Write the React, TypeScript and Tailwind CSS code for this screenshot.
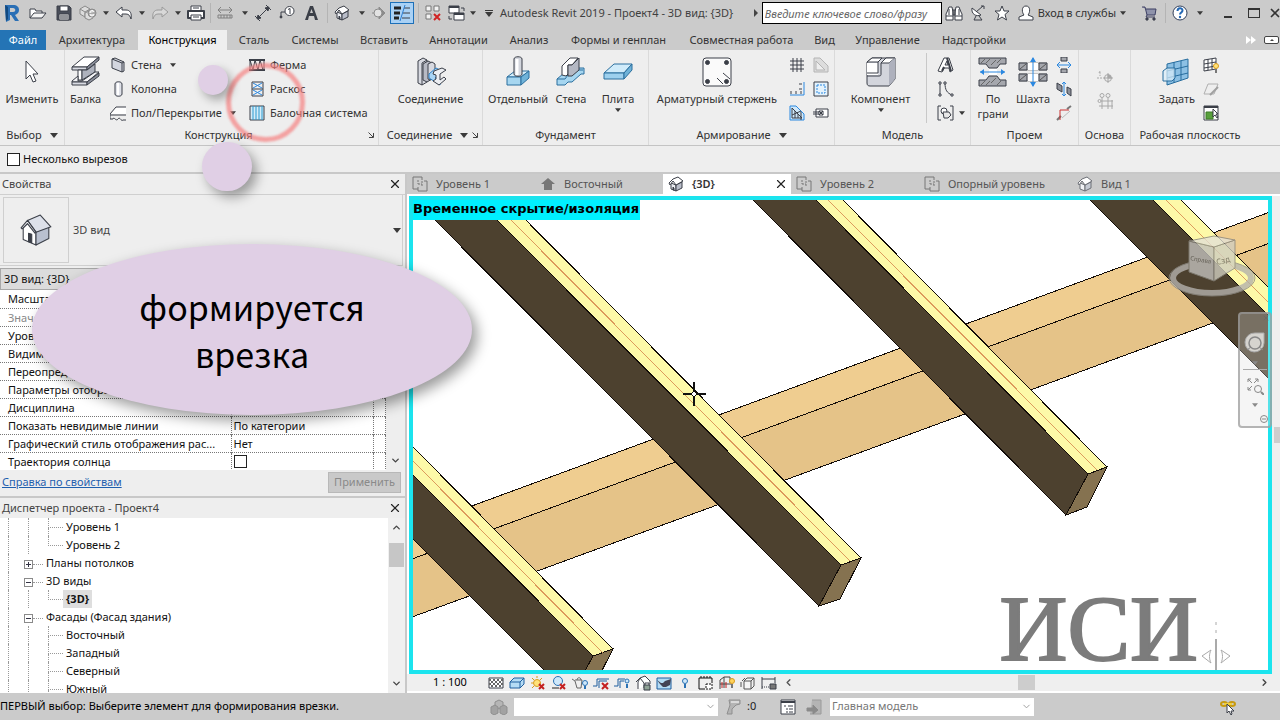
import { useState, type ReactNode } from "react";
import { ChevronDown, ChevronLeft, ChevronRight, ChevronUp, X } from "lucide-react";

interface PicProps {
  w?: number;
  h?: number;
  children: ReactNode;
}

// Small line drawing in the toolbar style: dark outline, white fill
function Pic({ w = 16, h = 16, children }: PicProps) {
  return (
    <svg
      width={w}
      height={h}
      viewBox={`0 0 ${w} ${h}`}
      fill="none"
      stroke="#3b3f48"
      strokeWidth={1}
      strokeLinejoin="round"
      className="shrink-0"
      aria-hidden="true"
    >
      {children}
    </svg>
  );
}

function Caret({ big = false, light = false }: { big?: boolean; light?: boolean }) {
  return (
    <svg width={big ? 8 : 6} height={big ? 5 : 4} viewBox="0 0 8 5" className="shrink-0" aria-hidden="true">
      <path d="M0 0h8L4 5z" fill={light ? "#8a8a8a" : "#3a3a3a"} />
    </svg>
  );
}

function Launcher() {
  return (
    <svg width="6" height="6" viewBox="0 0 6 6" className="shrink-0" aria-hidden="true">
      <path d="M0.5 0.5L5 5M5.5 1v4.5H1" fill="none" stroke="#444" />
    </svg>
  );
}

const icons = {
  revit: (
    <Pic w={16} h={18}>
      <path d="M1 1h8c4 0 6 2 6 5s-2 4-4 5l4 6h-4l-4-6H6v5l-4 2z" fill="#2a6fb5" stroke="none" />
      <path d="M6 4h3c3 0 3 4 0 4H6z" fill="#cbcbcb" stroke="none" />
      <path d="M1 1l3 2v12l-2 2z" fill="#12497f" stroke="none" />
    </Pic>
  ),
  open: (
    <Pic w={18}>
      <path d="M1 13V4h5l1 2h6v2" fill="#fff" />
      <path d="M1 13l4-5h12l-4 5z" fill="#f4f4f4" />
    </Pic>
  ),
  save: (
    <Pic>
      <path d="M1 1h12l2 2v12H1z" fill="#4a4f5a" />
      <path d="M4 1h8v5H4z" fill="#fff" />
      <path d="M3 9h10v6H3z" fill="#e8e8e8" />
      <path d="M4 11h8M4 13h8" />
    </Pic>
  ),
  sync: (
    <Pic w={18}>
      <g stroke="#8a8a8a" fill="#dcdcdc">
        <path d="M1 4l5-3 5 3-5 3zM1 4v5l5 3V7M11 4v4" />
        <path d="M6 8l4-2 4 2v5l-4 2-4-2z" />
        <circle cx="13" cy="8" r="4" fill="#a9a9a9" />
        <path d="M11 8a2 2 0 0 1 4-1M15 9a2 2 0 0 1-4 0" stroke="#fff" />
      </g>
    </Pic>
  ),
  undo: (
    <Pic w={18}>
      <path d="M1 7l6-5v3h4c4 0 6 3 5 9-1-3-2-5-5-5H7v3z" fill="#fff" />
    </Pic>
  ),
  redo: (
    <Pic w={18}>
      <path d="M17 7l-6-5v3H7c-4 0-6 3-5 9 1-3 2-5 5-5h4v3z" fill="#d8d8d8" stroke="#9a9a9a" />
    </Pic>
  ),
  print: (
    <Pic w={18}>
      <path d="M4 6V1h10v5" fill="#fff" />
      <path d="M1 6h16v7H1z" fill="#fff" strokeWidth={2} />
      <path d="M4 10h10v5H4z" fill="#fff" />
      <path d="M6 3h6M6 12h6" />
    </Pic>
  ),
  measure: (
    <Pic>
      <g stroke="#808080">
        <path d="M1 5h14M4 2L1 5l3 3M12 2l3 3-3 3" />
        <path d="M1 10h14v3H1zM4 10v3M7 10v3M10 10v3M13 10v3" />
      </g>
    </Pic>
  ),
  aligned: (
    <Pic>
      <path d="M3 13L13 3M0 11l5 5M11 0l5 5" />
      <path d="M2 14l1-4 3 3zM14 2l-1 4-3-3z" fill="#3b3f48" />
    </Pic>
  ),
  tag: (
    <Pic>
      <path d="M2 12V7h4" />
      <circle cx="2" cy="12" r="1" fill="#3b3f48" />
      <circle cx="10.500" cy="6" r="4.500" fill="#fff" />
      <path d="M9 4.500l2-1V9" />
    </Pic>
  ),
  textA: (
    <Pic>
      <path d="M2 15L7 1h3l5 14h-3l-1-4H6l-1 4zM7 8h3L8.500 4z" fill="#3b3f48" fillRule="evenodd" stroke="none" />
    </Pic>
  ),
  house: (
    <Pic>
      <path d="M3 7v6l5 2V9z" fill="#eceef3" />
      <path d="M8 9v6l6-3V6z" fill="#b9bdc9" />
      <path d="M1 7l4-4 5-2 5 4-7 4-3-4-3 4z" fill="#fff" />
      <path d="M5 14v-3l1 1v2z" fill="#3b3f48" />
    </Pic>
  ),
  viewHouse: (
    <Pic>
      <g stroke="#6d7077">
        <path d="M3 7v6l5 2V9z" fill="#f2f3f6" />
        <path d="M8 9v6l6-3V6z" fill="#c6cad3" />
        <path d="M1 7l4-4 5-2 5 4-7 4-3-4-3 4z" fill="#fff" />
      </g>
    </Pic>
  ),
  section: (
    <Pic>
      <path d="M1 8h3M8 2l6 6-6 6z" fill="#8c8c8c" stroke="#8c8c8c" />
      <circle cx="7" cy="8" r="4" fill="#e2e2e2" stroke="#8c8c8c" />
    </Pic>
  ),
  thin: (
    <Pic w={18}>
      <path d="M1 3h7M1 8h6M1 13h5" stroke="#222" strokeWidth={3} />
      <path d="M11 3h6M10 8h7M9 13h8" />
      <path d="M12 0L7 16" stroke="#2b7cd0" />
    </Pic>
  ),
  closeHidden: (
    <Pic>
      <path d="M1 1h5v5H1zM9 1h5v5H9zM1 9h5v5H1z" fill="#f2f2f2" stroke="#777" />
      <path d="M9 9l6 6M15 9l-6 6" stroke="#d02424" strokeWidth={2} />
    </Pic>
  ),
  switchWin: (
    <Pic w={18}>
      <path d="M1 1h10v7H1zM6 8h10v7H6z" fill="#fff" />
      <path d="M1 2h10M6 9h10" strokeWidth={2} />
      <path d="M13 3h3v3M1 11v3h3" />
    </Pic>
  ),
  binoculars: (
    <Pic w={18}>
      <path d="M2 7l2-5h3l1 5v8H1V9zM16 7l-2-5h-3l-1 5v8h7V9z" fill="#fff" />
      <path d="M8 5h2v5H8zM1 11h7M10 11h7M4 4v6M14 4v6" />
    </Pic>
  ),
  dish: (
    <Pic>
      <path d="M2 3c-1 6 4 9 9 7z" fill="#fff" />
      <path d="M6 7l7-6M11 1h3v3M6 11l-2 4h8l-3-4" />
    </Pic>
  ),
  star: (
    <Pic>
      <path d="M8 1l2 5h5l-4 3.500 1.500 5.500L8 12l-4.500 3L5 9.500 1 6h5z" fill="#fff" />
    </Pic>
  ),
  person: (
    <Pic>
      <path d="M8 1c5 0 4 7 2 9l5 2v3H1v-3l5-2C4 8 3 1 8 1z" fill="#fff" />
    </Pic>
  ),
  cart: (
    <Pic>
      <path d="M1 2h3l2 8h8l1-6H5" fill="#8f93ab" stroke="#3c3f63" />
      <path d="M6 10l-1 2h9" stroke="#3c3f63" />
      <circle cx="6" cy="14" r="1.200" fill="#3c3f63" />
      <circle cx="13" cy="14" r="1.200" fill="#3c3f63" />
    </Pic>
  ),
  help: (
    <Pic>
      <circle cx="8" cy="8" r="7" fill="#fff" stroke="#33415c" />
      <path d="M5.500 6c0-3.500 5-3.500 5-.5 0 2-2.500 2-2.500 4" stroke="#2468b4" strokeWidth={2} />
      <circle cx="8" cy="12" r="1.200" fill="#2468b4" stroke="none" />
    </Pic>
  ),
  cursor: (
    <Pic w={32} h={32}>
      <path d="M10 5v18l4-4 3 7 3-1-3-7h5z" fill="#fff" />
    </Pic>
  ),
  beam: (
    <Pic w={32} h={32}>
      <path d="M2 11L14 1h15l-12 10z" fill="#fff" />
      <path d="M2 11h15v3H2z" fill="#d9dbe2" />
      <path d="M17 11L29 1v3L17 14z" fill="#8b8f9b" />
      <path d="M8 14h4v10H8z" fill="#fff" />
      <path d="M12 14h5l8-6v8l-13 8z" fill="#aeb2bd" />
      <path d="M2 25l6-5v5h4l13-9h4L17 26H2z" fill="#f2f2f4" />
      <path d="M2 26h15v3H2z" fill="#d9dbe2" />
      <path d="M17 26l12-9v3l-12 9z" fill="#8b8f9b" />
    </Pic>
  ),
  wall: (
    <Pic>
      <path d="M2 2l3-1 9 4v9l-2 1-10-4z" fill="#d3d6df" />
      <path d="M2 2l10 4v9M12 6l2-1" />
    </Pic>
  ),
  column: (
    <Pic>
      <path d="M5 3c0-3 7-3 7 0v10c0 3-7 3-7 0z" fill="#e0e2e9" />
      <path d="M8 2v12" stroke="#fff" strokeWidth={2} />
    </Pic>
  ),
  floor: (
    <Pic>
      <path d="M6 2h10v7H1z" fill="#fff" stroke="none" />
      <path d="M16 2H6L0 9v5h3c1-3 3 3 5 0 2-3 3 3 5 1h3M0 10h16" />
    </Pic>
  ),
  truss: (
    <Pic>
      <path d="M0 3h16M0 13h16" strokeWidth={2} />
      <path d="M1 3v10M15 3v10M1 3l3 10 2-10 3 10 2-10 3 10" />
    </Pic>
  ),
  brace: (
    <Pic>
      <path d="M3 1h11v14H3zM3 8h11" />
      <path d="M4 2l9 5M13 2L4 7M4 9l9 5M13 9l-9 5" stroke="#2b88e0" />
    </Pic>
  ),
  beamSystem: (
    <Pic>
      <path d="M1 1h14v14H1z" fill="#d5ecf8" />
      <path d="M4 1v14M7 1v14M10 1v14M13 1v14" stroke="#2b9ad0" />
    </Pic>
  ),
  connection: (
    <Pic w={32} h={32}>
      <path d="M3 5l5-3 4 2v22l-5 3-4-2z" fill="#d7d9e0" />
      <path d="M7 7l5-3M7 7v22M8 8l5-3 4 2v16l-5 3-4-2z" fill="#b7bac4" />
      <path d="M13 8l4-2 3 2v13l-5 3-2-1z" fill="#d7d9e0" />
      <path d="M14 18l7-6 4 2v4l-5 4 5 3v4l-11-7z" fill="#a9d4f4" stroke="#2f7fc4" />
      <path d="M19 15l8-3 4 2-6 4v6l4-3 2 2-7 6-6-4 3-2v-4l-3-1z" fill="#eceef2" />
    </Pic>
  ),
  footing: (
    <Pic w={32} h={32}>
      <path d="M5 21l8-6h14l-8 6z" fill="#d8effb" stroke="#2b6f9e" />
      <path d="M5 21h14v8H5z" fill="#a6d6f0" stroke="#2b6f9e" />
      <path d="M19 21l8-6v7l-8 7z" fill="#6fb2d8" stroke="#2b6f9e" />
      <path d="M12 3c0-3 8-3 8 0v15c0 3-8 3-8 0z" fill="#d3d6dd" />
      <path d="M15 3v16" stroke="#fff" strokeWidth={3} />
    </Pic>
  ),
  footingWall: (
    <Pic w={32} h={32}>
      <path d="M2 23l6-5 4 1 8-7h9v6h-3l-9 8h-4l-3 3H2z" fill="#a6d6f0" stroke="#2b6f9e" />
      <path d="M2 23h8l3-4h4l6-5h5" stroke="#2b6f9e" />
      <path d="M7 19V10l8-8h8l-6 7H13v9l-2 2z" fill="#fff" />
      <path d="M13 9h4l7-7v12l-7 6h-4z" fill="#b4b8c3" />
    </Pic>
  ),
  slab: (
    <Pic w={32} h={32}>
      <path d="M2 17l10-9h18l-8 9z" fill="#d0ebfa" stroke="#2b6f9e" />
      <path d="M2 17h20v6H2z" fill="#9dd0ee" stroke="#2b6f9e" />
      <path d="M22 17l8-9v6l-8 9z" fill="#6fb2d8" stroke="#2b6f9e" />
    </Pic>
  ),
  rebar: (
    <Pic w={32} h={32}>
      <rect x="2" y="2" width="28" height="28" rx="3" fill="#fafafa" />
      <g fill="#3b3f48">
        <circle cx="6.500" cy="6.500" r="2" />
        <circle cx="25.500" cy="6.500" r="2" />
        <circle cx="6.500" cy="25.500" r="2" />
        <circle cx="25.500" cy="25.500" r="2" />
      </g>
      <path d="M16 22l6 6M22 17l7 6" />
    </Pic>
  ),
  mesh: (
    <Pic>
      <path d="M4 1v14M8 1v14M12 1v14M1 4h14M1 8h14M1 12h14" />
    </Pic>
  ),
  pathRebar: (
    <Pic>
      <path d="M1 14h14V1" stroke="#2b88e0" />
      <path d="M2 13v-3M7 13v-3M12 13v-3M13 3h-3M13 8h-3" />
    </Pic>
  ),
  fabric: (
    <Pic>
      <path d="M1 1h6l8 8v6H1z" fill="#cfe8fa" stroke="#2b88e0" />
      <path d="M3 3v10h10M3 3l10 10M6 6v7M9 9v4M12 7v8M3 10l9-4" />
    </Pic>
  ),
  areaOff: (
    <Pic>
      <path d="M1 1h6l8 8v6H1z" fill="#ddd" stroke="#b4b4b4" />
      <path d="M3 4v9h9z" fill="#eee" stroke="#b4b4b4" />
    </Pic>
  ),
  area: (
    <Pic>
      <path d="M1 1h14v14H1z" fill="#e4f2fc" />
      <path d="M4 4h8v8H4z" stroke="#2b88e0" strokeDasharray="2 1" />
    </Pic>
  ),
  coupler: (
    <Pic>
      <path d="M3 4h12v8H3z" fill="#fff" />
      <path d="M0 7h6M0 9h6M6 6h4v4H6zM6 6l4 4M10 6l-4 4" />
    </Pic>
  ),
  component: (
    <Pic w={32} h={32}>
      <path d="M2 6l5-4h23v21l-6 7H5c-2 0-3-1-3-3z" fill="#d3d5dc" />
      <path d="M2 7h11v12H2z" fill="#fff" stroke="none" />
      <path d="M2 6l5-4h10l-4 4zM16 7l5-5h9l-6 5z" fill="#fff" />
      <path d="M24 7l6-5v21l-6 7z" fill="#aeb1bd" stroke="none" />
      <path d="M2 20h12c2 0 2-1 2-2V7M13 6v11M2 17h11" />
    </Pic>
  ),
  modelText: (
    <Pic w={18}>
      <path d="M1 14L7 1h5l4 12-3 2-1-4H7l-2 4zM8 8h3l-1-4z" fill="#fff" fillRule="evenodd" />
      <path d="M10 1l4 13M5 14l2-4" strokeWidth={2} />
    </Pic>
  ),
  modelLine: (
    <Pic w={18}>
      <path d="M3 3v10M8 2c0 7 2 10 7 12" />
      <path d="M2 1h2v2H2zM2 13h2v2H2zM7 1h2v2H7zM14 13h2v2h-2z" fill="#fff" />
    </Pic>
  ),
  modelGroup: (
    <Pic w={18}>
      <path d="M4 1H1v14h3M13 1h3v14h-3" />
      <circle cx="7" cy="6" r="3" fill="#fff" />
      <path d="M6 7h6l2 3-3 3H7z" fill="#e7e7e7" />
    </Pic>
  ),
  openFace: (
    <Pic w={32} h={32}>
      <path d="M2 2h27v6h-6l-3 4h-8l-3-4H2zM2 30h27v-6h-6l-3-4h-8l-3 4H2z" fill="#a5a7ad" />
      <path d="M4 7l4-4M9 7l4-4M14 9l5-5M20 7l4-4M4 29l4-4M9 29l4-4M14 27l5-5M20 29l4-4" stroke="#666" />
      <path d="M12 13h8v6h-8z" fill="#fff" stroke="none" />
      <path d="M3 16h25" stroke="#2b88e0" />
      <path d="M7 13l-4 3 4 3zM24 13l4 3-4 3z" fill="#2b88e0" stroke="none" />
    </Pic>
  ),
  shaft: (
    <Pic w={32} h={32}>
      <path d="M2 7h28M2 14h28M2 18h28M2 25h28" stroke="#9a9a9a" />
      <path d="M2 7h8v7H2zM22 7h8v7h-8zM2 18h8v7H2zM22 18h8v7h-8z" fill="#a5a7ad" />
      <path d="M3 13l6-5M23 13l6-5M3 24l6-5M23 24l6-5" stroke="#555" />
      <path d="M11 7h10v7H11zM11 18h10v7H11z" fill="#fff" stroke="none" />
      <path d="M16 2v28" stroke="#2b88e0" />
      <path d="M13 6l3-5 3 5zM13 26l3 5 3-5z" fill="#2b88e0" stroke="none" />
    </Pic>
  ),
  openWall: (
    <Pic>
      <path d="M5 0h6v4H5zM5 12h6v4H5z" fill="#a5a7ad" />
      <path d="M1 8h14M4 5L1 8l3 3M12 5l3 3-3 3" stroke="#2b88e0" />
    </Pic>
  ),
  openVert: (
    <Pic>
      <path d="M1 2l5 3v6L1 8zM11 6l4 2v7l-4-3z" fill="#8d9099" />
      <path d="M8 1v14M6 3l2-2 2 2M6 13l2 2 2-2" stroke="#2b88e0" />
    </Pic>
  ),
  dormer: (
    <Pic>
      <path d="M1 15l4-4M11 4l4-3" stroke="#777" strokeWidth={2} />
      <path d="M6 13l8-7" stroke="#bbb" />
      <path d="M4 15V5h9" stroke="#c33" />
    </Pic>
  ),
  levelOff: (
    <Pic w={18}>
      <path d="M1 9h9M3 4l1-2v5" stroke="#a8a8a8" strokeDasharray="2 1" />
      <circle cx="12" cy="9" r="3.500" stroke="#a8a8a8" />
      <path d="M12 4v10M8 9h9M12 9V6a3 3 0 0 1 3 3z" fill="#a8a8a8" stroke="#a8a8a8" />
    </Pic>
  ),
  gridOff: (
    <Pic>
      <g stroke="#a8a8a8">
        <circle cx="5" cy="2.500" r="2" />
        <circle cx="11" cy="2.500" r="2" />
        <circle cx="2.500" cy="8" r="1.500" />
        <path d="M5 5v11M11 5v11M4 8h12M2 13h14M15 7v9" />
      </g>
    </Pic>
  ),
  setPlane: (
    <Pic w={32} h={32}>
      <path d="M6 8l21-5v19L6 29z" fill="#8cc0e4" stroke="#276d9e" />
      <path d="M13 6v21M20 5v19M6 15l21-5M6 22l21-5" stroke="#276d9e" />
      <path d="M2 15l4-3h8v10l-3 3H2z" fill="#dbeefa" fillOpacity=".7" stroke="#276d9e" />
    </Pic>
  ),
  showPlane: (
    <Pic>
      <path d="M1 3l12-2v11L1 14zM5 2v11M9 2v10M1 7l12-2M1 11l12-2" fill="#fff" />
      <circle cx="13" cy="9" r="2.500" fill="#ffe27a" stroke="#d99a1c" />
      <path d="M13 12v4" stroke="#777" strokeWidth={2} />
    </Pic>
  ),
  refPlane: (
    <Pic>
      <path d="M5 3h10l-4 10H1z" stroke="#b0b0b0" />
      <path d="M15 6l-8 8" stroke="#a0a0a0" strokeWidth={2} />
    </Pic>
  ),
  viewer: (
    <Pic>
      <path d="M1 1h14v14H1z" fill="#fff" />
      <path d="M1 2h14" strokeWidth={2} />
      <path d="M3 7h7v7H3z" fill="#58a03c" stroke="#3c7a26" />
      <path d="M10 4v8l2-2 2 3 1-1-2-3h2z" fill="#fff" />
    </Pic>
  ),
  plan: (
    <Pic>
      <g stroke="#777">
        <path d="M10 4V1H1v12h5M6 11v4h9V5h-3" />
        <path d="M6 8h4M10 5v6M6 4v4" strokeDasharray="2 1" />
      </g>
    </Pic>
  ),
  elevation: (
    <Pic>
      <path d="M8 2l7 6h-3v6H4V8H1z" fill="#777" stroke="none" />
    </Pic>
  ),
  detail: (
    <Pic>
      <path d="M1 3h14v10H1z" fill="#fff" />
      <path d="M1 5h14M1 9h14" stroke="#666" strokeWidth={2} strokeDasharray="2 2" />
      <path d="M3 7h12M3 11h12" stroke="#666" strokeWidth={2} strokeDasharray="2 2" />
    </Pic>
  ),
  style: (
    <Pic>
      <path d="M1 7l4-4h10v6l-4 4H1z" fill="#b5dcf5" stroke="#1f5f9e" />
      <path d="M1 7h10v6M11 7l4-4" stroke="#1f5f9e" />
    </Pic>
  ),
  sunOff: (
    <Pic>
      <circle cx="7" cy="8" r="3.500" fill="#ffe27a" stroke="#d99a1c" />
      <path d="M7 1v2M1 8h2M2 3l2 2M12 3l-2 2M2 13l2-2" stroke="#d99a1c" />
      <path d="M9 9l5 5M14 9l-5 5" stroke="#c42020" strokeWidth={2} />
    </Pic>
  ),
  shadowOff: (
    <Pic>
      <circle cx="7" cy="6" r="4.500" fill="#cfe8fa" stroke="#2b72b4" />
      <path d="M1 13h7" stroke="#888" strokeWidth={2} />
      <path d="M9 9l5 5M14 9l-5 5" stroke="#c42020" strokeWidth={2} />
    </Pic>
  ),
  render: (
    <Pic>
      <path d="M0 4l3 2 2 7h4l1-8H3M5 5c0-3 4-3 4 0" stroke="#666" />
      <circle cx="13" cy="8" r="2.500" fill="#cfe8fa" stroke="#2b72b4" />
      <path d="M13 11v3" stroke="#2b72b4" strokeWidth={2} />
    </Pic>
  ),
  crop: (
    <Pic>
      <path d="M0 11h4V4h12M6 13V6h8" stroke="#1f5f9e" />
      <path d="M9 8l6 6M15 8l-6 6" stroke="#c42020" strokeWidth={2} />
    </Pic>
  ),
  cropShow: (
    <Pic>
      <path d="M0 11h4V4h7M6 13V6h4" stroke="#1f5f9e" />
      <circle cx="13" cy="6" r="2" fill="#cfe8fa" stroke="#2b72b4" />
      <path d="M13 9v4" stroke="#2b72b4" strokeWidth={2} />
    </Pic>
  ),
  lockView: (
    <Pic>
      <path d="M3 14V7l2-4 5-2 5 5v3M1 7l4-4 4 5v5" fill="#fff" />
      <path d="M9 10h6v5H9z" fill="#8fa396" />
      <path d="M10 10V8h4v2" />
    </Pic>
  ),
  tempHide: (
    <Pic>
      <path d="M1 3h14v11H1z" fill="#b5dcf5" stroke="#1f5f9e" />
      <path d="M1 5l4 3h2l2-2 6-2-1 6-4 2H7L4 9z" fill="#445" stroke="none" />
    </Pic>
  ),
  bulb: (
    <Pic>
      <circle cx="8" cy="6" r="2.500" fill="#cfe8fa" stroke="#2b72b4" />
      <path d="M8 9v4" stroke="#2b72b4" strokeWidth={2} />
    </Pic>
  ),
  tempProps: (
    <Pic>
      <path d="M1 14V3h13v5M1 14h6" stroke="#111" />
      <path d="M3 3V1M6 3V1M9 3V1M12 3V1" stroke="#111" />
      <path d="M8 9h6v5H8z" fill="#fff" stroke="#111" strokeDasharray="2 1" />
    </Pic>
  ),
  analytic: (
    <Pic>
      <path d="M1 14V5l4-3h6v8M5 2v11M1 9h9" stroke="#444" />
      <path d="M3 7v6M7 7v6" stroke="#c42020" />
      <circle cx="13" cy="6" r="2.500" fill="#ffd35c" stroke="#d99a1c" />
      <path d="M13 9v4" stroke="#777" strokeWidth={2} />
    </Pic>
  ),
  displace: (
    <Pic>
      <path d="M4 6h7v8H4zM4 6l3-3h7l-3 3M14 3v8l-3 3M1 7v5M2 6l3-3" fill="#f5f5f5" stroke="#555" />
    </Pic>
  ),
  constraints: (
    <Pic>
      <path d="M1 2v12M14 2v6M1 4h13" />
      <path d="M1 12h7" strokeDasharray="1 1" />
      <path d="M9 9h6v5H9z" fill="#777" />
    </Pic>
  ),
  worksets: (
    <Pic w={18}>
      <path d="M5 3l4-2 4 2v5l-4 2-4-2z" fill="#b5b5b5" stroke="#8f8f8f" />
      <path d="M1 8l4-2 3 2v6l-4 2-3-2zM10 8l4-2 3 2v6l-3 2-4-2z" fill="#a2a2a2" stroke="#8f8f8f" />
    </Pic>
  ),
  brush: (
    <Pic>
      <path d="M3 1h11v4l-4 1-4 4v5H1l3-9z" fill="#b4b4b4" stroke="#8f8f8f" />
      <path d="M5 3h8" stroke="#fff" />
    </Pic>
  ),
  options: (
    <Pic>
      <path d="M1 1h14v14H1z" fill="#fff" />
      <path d="M1 3h14" strokeWidth={2} />
      <path d="M4 7h2M8 7h5M6 10h2M9 10h4M6 13h2M9 13h4" />
    </Pic>
  ),
  pinOff: (
    <Pic>
      <path d="M6 1h9v14H4" fill="#b4b4b4" stroke="#9a9a9a" />
      <path d="M1 9h6V6l5 5-5 4v-3H1z" fill="#8a8a8a" stroke="#8a8a8a" />
    </Pic>
  ),
  selectLinks: (
    <Pic>
      <ellipse cx="4" cy="5" rx="3" ry="2" stroke="#c79a10" strokeWidth={2} />
      <ellipse cx="12" cy="5" rx="3" ry="2" stroke="#c79a10" strokeWidth={2} />
      <path d="M4 5h8" stroke="#f2cf3c" strokeWidth={2} />
      <path d="M7 5v9l2-2 2 4 1-1-1-3h3z" fill="#fff" />
    </Pic>
  ),
};

type IconName = keyof typeof icons;

function Tool({ icon, label, className }: { icon: IconName; label: string; className: string }) {
  return (
    <button type="button" aria-label={label} className={`flex h-6 shrink-0 items-center justify-center ${className}`}>
      {icons[icon]}
    </button>
  );
}

function Divider() {
  return <span className="h-5 w-px shrink-0 bg-[#b4b4b4]" />;
}

function Drop({ label, className }: { label: string; className: string }) {
  return (
    <button type="button" aria-label={label} className={`flex h-6 shrink-0 items-center justify-center ${className}`}>
      <Caret />
    </button>
  );
}

function TitleBar() {
  return (
    <header className="flex h-[30px] shrink-0 items-center overflow-hidden bg-[#cbcbcb] pb-1">
      <Tool icon="revit" label="Меню приложения" className="w-6" />
      <Tool icon="open" label="Открыть" className="w-7" />
      <Tool icon="save" label="Сохранить" className="w-6" />
      <Tool icon="sync" label="Синхронизировать" className="w-6" />
      <Drop label="Параметры синхронизации" className="w-3" />
      <Tool icon="undo" label="Отменить" className="w-6" />
      <Drop label="Список отмены" className="w-3" />
      <Tool icon="redo" label="Повторить" className="w-6" />
      <Drop label="Список повтора" className="w-3" />
      <Tool icon="print" label="Печать" className="w-6" />
      <span className="w-[2px] shrink-0" />
      <Divider />
      <Tool icon="measure" label="Измерить" className="w-7" />
      <Drop label="Виды измерений" className="w-3" />
      <Tool icon="aligned" label="Размер" className="w-6" />
      <Tool icon="tag" label="Марка" className="w-6" />
      <Tool icon="textA" label="Текст" className="w-6" />
      <span className="w-1 shrink-0" />
      <Divider />
      <Tool icon="house" label="3D вид по умолчанию" className="w-7" />
      <Drop label="Виды 3D" className="w-3" />
      <Tool icon="section" label="Разрез" className="w-[22px]" />
      <button
        type="button"
        aria-label="Тонкие линии"
        aria-pressed="true"
        className="flex h-[22px] w-6 shrink-0 items-center justify-center border border-[#1c6fb8] bg-[#a9d1f5]"
      >
        {icons.thin}
      </button>
      <span className="w-1 shrink-0" />
      <Divider />
      <Tool icon="closeHidden" label="Закрыть неактивные" className="w-7" />
      <Tool icon="switchWin" label="Переключение окон" className="w-5" />
      <Drop label="Список окон" className="w-3" />
      <button type="button" aria-label="Настройка панели" className="flex h-6 w-5 shrink-0 flex-col items-center justify-center gap-px">
        <span className="h-px w-2 bg-[#3a3a3a]" />
        <Caret big />
      </button>
      <h1 className="min-w-0 flex-1 whitespace-nowrap pl-px text-[#3f3f3f]">Autodesk Revit 2019 - Проект4 - 3D вид: {"{3D}"}</h1>
      <span className="mr-1 h-0 w-0 border-y-4 border-l-4 border-y-transparent border-l-[#444]" />
      <input
        aria-label="Поиск"
        placeholder="Введите ключевое слово/фразу"
        className="h-[22px] w-[180px] shrink-0 border border-black bg-white px-[2px] italic text-[#666] outline-none placeholder:text-[#666]"
      />
      <Tool icon="binoculars" label="Найти" className="w-6" />
      <Tool icon="dish" label="Центр связи" className="w-6" />
      <Tool icon="star" label="Избранное" className="w-6" />
      <button type="button" className="flex h-6 shrink-0 items-center gap-1 whitespace-nowrap pl-1 pr-[3px] text-[#333]">
        {icons.person}
        Вход в службы
        <Caret />
      </button>
      <Tool icon="cart" label="App Store" className="ml-1 w-8" />
      <Divider />
      <Tool icon="help" label="Справка" className="w-7" />
      <Drop label="Меню справки" className="w-3" />
      <button type="button" aria-label="Свернуть" className="flex h-6 w-[34px] shrink-0 items-center justify-center pl-[10px] pt-2">
        <span className="h-[2px] w-2 bg-[#333]" />
      </button>
      <button type="button" aria-label="Развернуть" className="flex h-6 w-7 shrink-0 items-center justify-center">
        <span className="h-[10px] w-3 border border-t-2 border-[#333]" />
      </button>
      <button type="button" aria-label="Закрыть" className="flex h-6 w-3 shrink-0 items-center">
        <X size={14} strokeWidth={3} color="#333" className="shrink-0" />
      </button>
    </header>
  );
}

const ribbonTabs = [
  { label: "Архитектура", class: "w-[92px]" },
  { label: "Конструкция", class: "w-[89px]" },
  { label: "Сталь", class: "w-[54px]" },
  { label: "Системы", class: "w-[68px]" },
  { label: "Вставить", class: "w-[70px]" },
  { label: "Аннотации", class: "w-[79px]" },
  { label: "Анализ", class: "w-[62px]" },
  { label: "Формы и генплан", class: "w-[117px]" },
  { label: "Совместная работа", class: "w-[129px]" },
  { label: "Вид", class: "w-[37px]" },
  { label: "Управление", class: "w-[89px]" },
  { label: "Надстройки", class: "w-[84px]" },
];

function RibbonTabs({ active, onSelect }: { active: string; onSelect: (label: string) => void }) {
  return (
    <nav className="flex h-5 shrink-0 items-stretch overflow-hidden whitespace-nowrap bg-[#cbcbcb] text-[#333]">
      <button type="button" className="w-[46px] shrink-0 bg-[#2474b5] text-white">Файл</button>
      {ribbonTabs.map((tab) => (
        <button
          key={tab.label}
          type="button"
          onClick={() => onSelect(tab.label)}
          className={`flex shrink-0 items-center justify-center ${tab.class} ${active === tab.label ? "bg-[#eeeeee] text-black" : ""}`}
        >
          {tab.label}
        </button>
      ))}
      <span className="flex-1" />
      <span className="flex items-center gap-2 pr-px">
        <svg width="10" height="8" viewBox="0 0 10 8" aria-hidden="true">
          <path d="M0 0l5 4-5 4zM5 0l5 4-5 4z" fill="#fff" />
        </svg>
        <button type="button" aria-label="Свернуть ленту" className="flex h-2 w-[15px] items-center justify-center rounded-xs border border-[#444] bg-white">
          <span className="h-0 w-0 border-x-2 border-b-2 border-x-transparent border-b-[#444]" />
        </button>
      </span>
    </nav>
  );
}

interface PanelProps {
  title: string;
  className: string;
  caret?: boolean;
  launcher?: boolean;
  children: ReactNode;
}

function Panel({ title, className, caret, launcher, children }: PanelProps) {
  return (
    <section className={`flex shrink-0 flex-col border-r border-[#dadada] ${className}`}>
      <div className="flex flex-1 items-start pt-[3px]">{children}</div>
      <div className="flex h-5 items-center whitespace-nowrap px-1">
        <span className="flex flex-1 items-center justify-center gap-2">
          {title}
          {caret && <Caret big />}
        </span>
        {launcher && <Launcher />}
      </div>
    </section>
  );
}

function BigTool({ icon, label, className, caret }: { icon: IconName; label: string; className: string; caret?: boolean }) {
  return (
    <button type="button" className={`flex shrink-0 flex-col items-center pt-[3px] leading-[15px] ${className}`}>
      {icons[icon]}
      <span className="pt-[3px]">{label}</span>
      {caret && (
        <span className="flex h-2 items-center">
          <Caret />
        </span>
      )}
    </button>
  );
}

function RowTool({ icon, label, caret }: { icon: IconName; label: string; caret?: boolean }) {
  return (
    <button type="button" className="flex h-6 items-center whitespace-nowrap">
      {icons[icon]}
      <span className="pl-[5px] pr-2">{label}</span>
      {caret && <Caret />}
    </button>
  );
}

function Ribbon() {
  return (
    <div className="flex h-24 shrink-0 overflow-hidden border-b border-[#c4c4c4] bg-[#eeeeee] text-[#333]">
      <Panel title="Выбор" className="w-[65px]" caret>
        <BigTool icon="cursor" label="Изменить" className="w-16" />
      </Panel>
      <Panel title="Конструкция" className="w-[314px]" launcher>
        <BigTool icon="beam" label="Балка" className="w-[41px]" />
        <div className="ml-1 flex w-[139px] shrink-0 flex-col">
          <RowTool icon="wall" label="Стена" caret />
          <RowTool icon="column" label="Колонна" />
          <RowTool icon="floor" label="Пол/Перекрытие" caret />
        </div>
        <div className="flex shrink-0 flex-col">
          <RowTool icon="truss" label="Ферма" />
          <RowTool icon="brace" label="Раскос" />
          <RowTool icon="beamSystem" label="Балочная система" />
        </div>
      </Panel>
      <Panel title="Соединение" className="w-[104px]" caret launcher>
        <BigTool icon="connection" label="Соединение" className="w-full" />
      </Panel>
      <Panel title="Фундамент" className="w-[166px]">
        <BigTool icon="footing" label="Отдельный" className="w-[70px]" />
        <BigTool icon="footingWall" label="Стена" className="w-9" />
        <BigTool icon="slab" label="Плита" className="w-[58px]" caret />
      </Panel>
      <Panel title="Армирование" className="w-[186px]" caret>
        <BigTool icon="rebar" label="Арматурный стержень" className="w-[136px] whitespace-nowrap" />
        <div className="grid grid-cols-2 gap-x-2 pl-1">
          <Tool icon="mesh" label="Сетка" className="w-4" />
          <Tool icon="areaOff" label="Армирование по площади" className="w-4" />
          <Tool icon="pathRebar" label="Армирование по траектории" className="w-4" />
          <Tool icon="area" label="Защитный слой" className="w-4" />
          <Tool icon="fabric" label="Арматурная сетка" className="w-4" />
          <Tool icon="coupler" label="Соединитель" className="w-4" />
        </div>
      </Panel>
      <Panel title="Модель" className="w-[136px]">
        <BigTool icon="component" label="Компонент" className="w-[91px]" caret />
        <span className="h-[70px] w-px bg-[#c8c8c8]" />
        <div className="flex flex-col pl-[10px]">
          <Tool icon="modelText" label="Текст модели" className="w-[18px]" />
          <Tool icon="modelLine" label="Линия модели" className="w-[18px]" />
          <span className="flex items-center gap-1">
            <Tool icon="modelGroup" label="Группа модели" className="w-[18px]" />
            <Caret />
          </span>
        </div>
      </Panel>
      <Panel title="Проем" className="w-[108px]">
        <BigTool icon="openFace" label="По грани" className="w-11" />
        <BigTool icon="shaft" label="Шахта" className="w-9" />
        <div className="flex flex-col pl-[5px]">
          <Tool icon="openWall" label="Проем в стене" className="w-4" />
          <Tool icon="openVert" label="Вертикальный проем" className="w-4" />
          <Tool icon="dormer" label="Проем слухового окна" className="w-4" />
        </div>
      </Panel>
      <Panel title="Основа" className="w-[52px]">
        <div className="flex flex-1 flex-col items-center pt-3">
          <Tool icon="levelOff" label="Уровень" className="w-5" />
          <Tool icon="gridOff" label="Ось" className="w-5" />
        </div>
      </Panel>
      <Panel title="Рабочая плоскость" className="w-[118px] border-r-0">
        <BigTool icon="setPlane" label="Задать" className="ml-6 w-11" />
        <div className="flex flex-col pl-1">
          <Tool icon="showPlane" label="Показать" className="w-4" />
          <Tool icon="refPlane" label="Опорная плоскость" className="w-4" />
          <Tool icon="viewer" label="Просмотр" className="w-4" />
        </div>
      </Panel>
    </div>
  );
}

interface PropertyRow {
  name: string;
  value?: string;
  disabled?: boolean;
  checkbox?: boolean;
}

const propertyRows: PropertyRow[] = [
  { name: "Масштаб вида" },
  { name: "Значение масштаба", disabled: true },
  { name: "Уровень детализации" },
  { name: "Видимость частей" },
  { name: "Переопределения" },
  { name: "Параметры отображения" },
  { name: "Дисциплина" },
  { name: "Показать невидимые линии", value: "По категории" },
  { name: "Графический стиль отображения рас...", value: "Нет" },
  { name: "Траектория солнца", checkbox: true },
];

function PropertiesPanel() {
  return (
    <section className="flex shrink-0 flex-col text-[#111]">
      <div className="flex h-[21px] items-center justify-between border-b border-[#cfcfcf] px-[2px] text-[#444]">
        <h2>Свойства</h2>
        <button type="button" aria-label="Закрыть свойства" className="pr-px">
          <X size={14} strokeWidth={2} color="#222" />
        </button>
      </div>
      <div className="mr-[2px] flex h-[71px] items-center border-b border-r border-[#cfcfcf] pl-[3px]">
        <span className="flex h-[66px] w-[66px] items-center justify-center border border-[#cfcfcf]">
          <svg width="32" height="32" viewBox="0 0 30 30" stroke="#3b3f48" strokeLinejoin="round" aria-hidden="true">
            <path d="M3 13l5-5 7 8v13L3 24z" fill="#fff" />
            <path d="M15 16l12-5v12l-12 6z" fill="#b9c0cf" />
            <path d="M7 6l12-5 10 11-14 5z" fill="#dde1ea" />
            <path d="M7 6l8 11-1 1-7-9-5 5-1-1z" fill="#eef0f4" />
            <path d="M8 26v-8l3 1v8z" fill="#3b3f48" />
          </svg>
        </span>
        <span className="flex-1 pl-1 text-[#444]">3D вид</span>
        <span className="pr-px">
          <Caret big />
        </span>
      </div>
      <div className="mt-[2px] flex h-[22px] items-center border-y border-l border-[#a8a8a8] bg-[#dcdcdc] pl-[3px]">3D вид: {"{3D}"}</div>
      <div className="flex h-[180px] overflow-hidden">
        <div className="flex-1 bg-white">
          <table className="w-full table-fixed border-collapse">
            <colgroup>
              <col className="w-[231px]" />
              <col />
              <col className="w-3" />
            </colgroup>
            <tbody>
              {propertyRows.map((row) => (
                <tr key={row.name} className="h-[18px] border-b border-dotted border-[#777] leading-[15px]">
                  <th scope="row" className={`whitespace-nowrap border-r border-dotted border-[#777] p-0 pl-2 text-left font-normal ${row.disabled ? "text-[#888]" : ""}`}>
                    {row.name}
                  </th>
                  <td className="border-r border-dotted border-[#777] p-0 pl-[2px]">
                    {row.checkbox ? (
                      <input type="checkbox" aria-label={row.name} className="block h-[13px] w-[13px] appearance-none border border-[#222] bg-white" />
                    ) : (
                      row.value
                    )}
                  </td>
                  <td className="border-r border-dotted border-[#777] p-0" />
                </tr>
              ))}
            </tbody>
          </table>
        </div>
        <div className="flex w-[19px] items-end justify-center pb-1">
          <ChevronDown size={11} strokeWidth={3} color="#444" />
        </div>
      </div>
      <div className="flex h-[26px] items-center justify-between pb-[2px] pl-[2px] pr-1">
        <a href="#help" className="text-[#1f5fae] underline">Справка по свойствам</a>
        <button type="button" disabled className="h-[21px] w-[73px] border border-[#b8b8b8] bg-[#c9c9c9] text-[#8a8a8a]">
          Применить
        </button>
      </div>
    </section>
  );
}

interface TreeRow {
  label: string;
  depth: 1 | 2;
  open?: boolean;
  last?: boolean;
  selected?: boolean;
}

const treeRows: TreeRow[] = [
  { label: "Уровень 1", depth: 2 },
  { label: "Уровень 2", depth: 2, last: true },
  { label: "Планы потолков", depth: 1, open: false },
  { label: "3D виды", depth: 1, open: true },
  { label: "{3D}", depth: 2, last: true, selected: true },
  { label: "Фасады (Фасад здания)", depth: 1, open: true },
  { label: "Восточный", depth: 2 },
  { label: "Западный", depth: 2 },
  { label: "Северный", depth: 2 },
  { label: "Южный", depth: 2 },
];

function TreeItem({ row }: { row: TreeRow }) {
  return (
    <li className="flex h-[18px] items-stretch pl-2 leading-[18px]">
      <span className="w-5 border-l border-dotted border-[#999]" />
      {row.depth === 2 ? (
        <>
          <span className="w-5 border-l border-dotted border-[#999]" />
          <span className="flex w-[15px] flex-col">
            <span className="h-[10px] border-b border-l border-dotted border-[#999]" />
            {!row.last && <span className="h-2 border-l border-dotted border-[#999]" />}
          </span>
          <span className={`px-[3px] ${row.selected ? "bg-[#dedede] font-bold" : ""}`}>{row.label}</span>
        </>
      ) : (
        <>
          <button
            type="button"
            aria-label={row.label}
            aria-expanded={row.open}
            className="-ml-1 mt-[6px] flex h-[9px] w-[9px] items-center justify-center border border-[#8a8a8a] bg-white"
          >
            <svg width="5" height="5" viewBox="0 0 5 5" aria-hidden="true">
              <path d={row.open ? "M0 2.500h5" : "M0 2.500h5M2.500 0v5"} stroke="#334" />
            </svg>
          </button>
          <span className="h-[11px] w-[10px] border-b border-dotted border-[#999]" />
          <span className="pl-[3px]">{row.label}</span>
        </>
      )}
    </li>
  );
}

function BrowserPanel() {
  return (
    <section className="flex min-h-0 flex-1 flex-col border-t-2 border-[#c8c8c8] text-[#111]">
      <div className="flex h-[20px] shrink-0 items-center justify-between px-[2px] text-[#444]">
        <h2>Диспетчер проекта - Проект4</h2>
        <button type="button" aria-label="Закрыть диспетчер" className="pr-px">
          <X size={14} strokeWidth={2} color="#222" />
        </button>
      </div>
      <div className="flex min-h-0 flex-1">
        <ul className="flex-1 overflow-hidden bg-white">
          {treeRows.map((row) => (
            <TreeItem key={row.label} row={row} />
          ))}
        </ul>
        <div className="flex w-[17px] flex-col items-center bg-[#f0f0f0] py-1">
          <ChevronUp size={11} strokeWidth={3} color="#444" />
          <span className="mt-[10px] h-6 w-[15px] bg-[#c6c6c6]" />
          <span className="flex-1" />
          <ChevronDown size={11} strokeWidth={3} color="#444" />
        </div>
      </div>
    </section>
  );
}

interface ViewTab {
  label: string;
  icon: IconName;
  class: string;
}

const viewTabs: ViewTab[] = [
  { label: "Уровень 1", icon: "plan", class: "w-32" },
  { label: "Восточный", icon: "elevation", class: "w-32" },
  { label: "{3D}", icon: "house", class: "w-32" },
  { label: "Уровень 2", icon: "plan", class: "w-32" },
  { label: "Опорный уровень", icon: "plan", class: "w-[153px]" },
  { label: "Вид 1", icon: "viewHouse", class: "w-32" },
];

function ViewTabs({ active, onSelect }: { active: string; onSelect: (label: string) => void }) {
  return (
    <div className="flex h-5 shrink-0 overflow-hidden bg-[#cbcbcb] text-[#555]">
      {viewTabs.map((tab) => (
        <button
          key={tab.label}
          type="button"
          onClick={() => onSelect(tab.label)}
          className={`flex shrink-0 items-center gap-2 pl-[5px] pr-[3px] ${tab.class} ${active === tab.label ? "bg-white font-semibold text-[#333]" : ""}`}
        >
          {icons[tab.icon]}
          <span className="flex-1 text-left">{tab.label}</span>
          {active === tab.label && <X size={14} strokeWidth={2} color="#222" />}
        </button>
      ))}
    </div>
  );
}

function Beams() {
  return (
    <svg
      viewBox="413 200 855 470"
      preserveAspectRatio="xMinYMin slice"
      className="absolute inset-0 h-full w-full"
      stroke="#120c08"
      strokeWidth={1}
      shapeRendering="crispEdges"
      role="img"
      aria-label="Стропила и прогон"
    >
      {/* purlin */}
      <path d="M412 528L1270 212V243L412 559z" fill="#efcd90" />
      <path d="M412 559L1270 243V302L412 617z" fill="#e5c388" />

      {/* rafters: dark side, lit top, end cut */}
      <path d="M411 537L571 697L593 656L411 473z" fill="#4d412f" />
      <path d="M411 473L593 656L613 649L411 445z" fill="#fdf9a8" />
      <path d="M593 656L613 649L592 690L571 697z" fill="#857250" />

      <path d="M405 190L819 606L841 565L467 190z" fill="#4d412f" />
      <path d="M467 190L841 565L861 558L496 190z" fill="#fdf9a8" />
      <path d="M841 565L861 558L840 599L819 606z" fill="#857250" />

      <path d="M743 190L1066 515L1088 474L806 190z" fill="#4d412f" />
      <path d="M806 190L1088 474L1107 467L833 190z" fill="#fdf9a8" />
      <path d="M1088 474L1107 467L1087 507L1066 515z" fill="#857250" />

      <path d="M1080 190L1271 381V318L1143 190z" fill="#4d412f" />
      <path d="M1143 190L1271 318V290L1171 190z" fill="#fdf9a8" />

      <path
        d="M413 461L603 653M491 200L850 561M828 200L1097 470M1166 200L1269 303"
        fill="none"
        stroke="#dc9a5c"
      />

      {/* crosshair */}
      <path d="M683 394h9M697 394h9M694 382v10M694 397v9" stroke="#111" strokeWidth={2} fill="none" />
      <path d="M694 391l3 3-3 3-3-3z" fill="#fff" />
    </svg>
  );
}

function ViewCube() {
  return (
    <svg width="90" height="66" viewBox="0 0 90 66" className="absolute right-[11px] top-8" opacity=".8" aria-hidden="true">
      <ellipse cx="45" cy="46" rx="39" ry="15" fill="none" stroke="#b4b1ac" strokeWidth="6" />
      <ellipse cx="45" cy="46" rx="43" ry="18" fill="none" stroke="#8b8882" strokeWidth="1" />
      <g stroke="#87847c" strokeWidth="1">
        <path d="M22 9l25 6v34l-25-9z" fill="#c2c0bb" />
        <path d="M47 15l21-7v28l-21 13z" fill="#d0cebf" />
        <path d="M22 9l25-5 21 4-21 7z" fill="#e3e1d5" />
      </g>
      <text x="23" y="28" fontSize="6" fill="#66635c" transform="rotate(10 23 28)">Справа</text>
      <text x="50" y="33" fontSize="8" fill="#66635c" transform="rotate(-14 50 33)">Сзд</text>
    </svg>
  );
}

function NavBar() {
  return (
    <div className="absolute -right-1 top-[112px] flex h-[116px] w-[34px] flex-col items-center rounded border-2 border-[#999]/70 bg-[#ddd]/30">
      <X size={8} className="self-end" color="#666" />
      <button type="button" aria-label="Штурвал" className="mt-[10px]">
        <svg width="22" height="22" viewBox="0 0 22 22" aria-hidden="true">
          <path d="M11 1h9v10a9.500 9.500 0 1 1-9-10z" fill="#d6d4cf" stroke="#aaa" />
          <circle cx="11" cy="11" r="6" fill="none" stroke="#888" strokeWidth="1.500" />
          <path d="M3 18l4-3M19 18l-4-3" stroke="#888" />
        </svg>
      </button>
      <span className="mt-[7px]">
        <Caret light />
      </span>
      <span className="mt-1 h-px w-6 shrink-0 bg-[#aaa]" />
      <button type="button" aria-label="Зумирование" className="mt-2">
        <svg width="17" height="17" viewBox="0 0 17 17" fill="none" stroke="#888" aria-hidden="true">
          <path d="M1 4V1h3M1 1l4 4M11 1V4M8 1h3L7 5M1 9v3h3M1 12l4-4" />
          <circle cx="11" cy="11" r="3.500" />
          <path d="M14 14l3 3" strokeWidth="2" />
        </svg>
      </button>
      <span className="mt-2">
        <Caret light />
      </span>
      <svg width="8" height="8" viewBox="0 0 8 8" className="mr-[2px] mt-2 self-end" fill="none" stroke="#888" aria-hidden="true">
        <circle cx="4" cy="4" r="3.500" />
        <path d="M2 4h4" />
      </svg>
    </div>
  );
}

function Canvas() {
  return (
    <div className="relative min-h-0 flex-1 border-4 border-[#1be4ee] bg-white">
      <Beams />
      <p className="absolute left-0 top-0 h-5 bg-[#00f0ff] pr-px font-['DejaVu_Sans',sans-serif] text-[13px] font-bold leading-[18px] text-black">
        Временное скрытие/изоляция
      </p>
      <ViewCube />
      <NavBar />
      <p className="absolute -bottom-3 right-[70px] font-['Liberation_Serif',serif] text-[94px] leading-[108px] text-[#7c7c7c] [-webkit-text-stroke:2px_#7c7c7c]">ИСИ</p>
      <svg width="30" height="48" viewBox="0 0 30 48" className="absolute bottom-0 right-[37px]" fill="none" stroke="#aaa" aria-hidden="true">
        <path d="M15 17v31" strokeWidth="2" />
        <path d="M15 0v16" strokeDasharray="3 5" />
        <path d="M10 28L1 34l9 7c-2-4-2-9 0-13zM20 28l9 6-9 7c2-4 2-9 0-13z" />
      </svg>
    </div>
  );
}

const viewControls: { icon: IconName; label: string }[] = [
  { icon: "detail", label: "Уровень детализации" },
  { icon: "style", label: "Визуальный стиль" },
  { icon: "sunOff", label: "Траектория солнца" },
  { icon: "shadowOff", label: "Тени" },
  { icon: "render", label: "Визуализация" },
  { icon: "crop", label: "Обрезать вид" },
  { icon: "cropShow", label: "Граница обрезки" },
  { icon: "lockView", label: "Заблокировать 3D вид" },
  { icon: "tempHide", label: "Временное скрытие" },
  { icon: "bulb", label: "Скрытые элементы" },
  { icon: "tempProps", label: "Временные свойства" },
  { icon: "analytic", label: "Аналитическая модель" },
  { icon: "displace", label: "Набор смещения" },
  { icon: "constraints", label: "Зависимости" },
];

function ViewControlBar() {
  return (
    <div className="flex h-[19px] shrink-0 items-center border-b-2 border-white bg-[#efefef]">
      <span className="w-[75px] shrink-0 pl-[26px] text-black">1 : 100</span>
      <div className="flex pl-[3px]">
        {viewControls.map((item) => (
          <button key={item.label} type="button" aria-label={item.label} className="flex h-4 w-[21px] items-center justify-center">
            {icons[item.icon]}
          </button>
        ))}
      </div>
      <ChevronLeft size={11} strokeWidth={3} color="#555" className="ml-1" />
      <span className="flex-1" />
      <span className="h-[15px] w-[17px] bg-[#cdcdcd]" />
      <span className="w-[224px]" />
      <ChevronRight size={11} strokeWidth={3} color="#444" className="mr-[10px]" />
    </div>
  );
}

function StatusBar() {
  return (
    <footer className="flex h-[27px] shrink-0 items-center bg-[#cbcbcb]">
      <p className="w-[483px] shrink-0 text-black">ПЕРВЫЙ выбор: Выберите элемент для формирования врезки.</p>
      <Tool icon="worksets" label="Рабочие наборы" className="w-[31px]" />
      <button type="button" aria-label="Активный рабочий набор" className="flex h-[18px] w-[204px] items-center justify-end bg-white pr-[2px]">
        <ChevronDown size={11} color="#999" />
      </button>
      <Tool icon="brush" label="Редактируемые" className="ml-1 w-6" />
      <span className="w-8 pl-px text-[#222]">:0</span>
      <Tool icon="options" label="Варианты конструкции" className="w-5" />
      <Tool icon="pinOff" label="Добавить в набор" className="ml-2 w-4" />
      <button type="button" className="ml-2 flex h-[18px] w-[204px] items-center justify-between bg-white pl-[2px] pr-[2px] text-[#777]">
        Главная модель
        <ChevronDown size={11} color="#999" />
      </button>
      <span className="flex-1" />
      <Tool icon="selectLinks" label="Выбор связей" className="mr-11 w-4" />
    </footer>
  );
}

function Callout() {
  return (
    <div className="pointer-events-none absolute inset-0 overflow-hidden">
      <span className="absolute left-[226px] top-[63px] h-[79px] w-[79px] rounded-full border-[5px] border-[#f58080]/70 blur-[1px]" />
      <span className="absolute left-[198px] top-[65px] h-[30px] w-[30px] rounded-full bg-[#e0cfe5] shadow-[4px_5px_10px_rgba(0,0,0,0.3)]" />
      <span className="absolute left-[202px] top-[142px] h-[49px] w-[50px] rounded-full bg-[#e0cfe5] shadow-[5px_6px_12px_rgba(0,0,0,0.35)]" />
      <p className="absolute left-[32px] top-[244px] flex h-[171px] w-[440px] items-center justify-center rounded-[50%] bg-[#e0cfe5] px-24 text-center font-['Noto_Sans_CJK_SC','Noto_Sans',sans-serif] text-[34px] leading-[47px] text-black shadow-[5px_6px_14px_rgba(0,0,0,0.4)]">
        формируется
        <br />
        врезка
      </p>
    </div>
  );
}

export default function App() {
  const [ribbonTab, setRibbonTab] = useState("Конструкция");
  const [viewTab, setViewTab] = useState("{3D}");

  return (
    <div className="relative flex h-screen w-full flex-col overflow-hidden bg-[#eeeeee] font-['Noto_Sans','Open_Sans',sans-serif] text-[11px]">
      <TitleBar />
      <RibbonTabs active={ribbonTab} onSelect={setRibbonTab} />
      <Ribbon />

      {/* Options bar */}
      <div className="flex h-7 shrink-0 items-center border-b-2 border-[#c8c8c8] pl-[7px]">
        <label className="flex items-center gap-[3px] text-[#111]">
          <input type="checkbox" className="h-[13px] w-[13px] appearance-none border border-[#222] bg-white" />
          Несколько вырезов
        </label>
      </div>

      <div className="flex min-h-0 flex-1">
        <aside className="flex w-[407px] shrink-0 flex-col border-r-2 border-[#c8c8c8]">
          <PropertiesPanel />
          <BrowserPanel />
        </aside>
        <main className="flex min-w-0 flex-1 flex-col">
          <ViewTabs active={viewTab} onSelect={setViewTab} />
          <div className="flex min-h-0 flex-1 bg-white pl-[2px] pt-[2px]">
            <Canvas />
            <div className="flex w-2 flex-col bg-[#efefef]">
              <span className="flex-1" />
              <span className="ml-[2px] h-4 bg-[#cdcdcd]" />
              <span className="flex-1" />
            </div>
          </div>
          <ViewControlBar />
        </main>
      </div>

      <StatusBar />
      <Callout />
    </div>
  );
}
